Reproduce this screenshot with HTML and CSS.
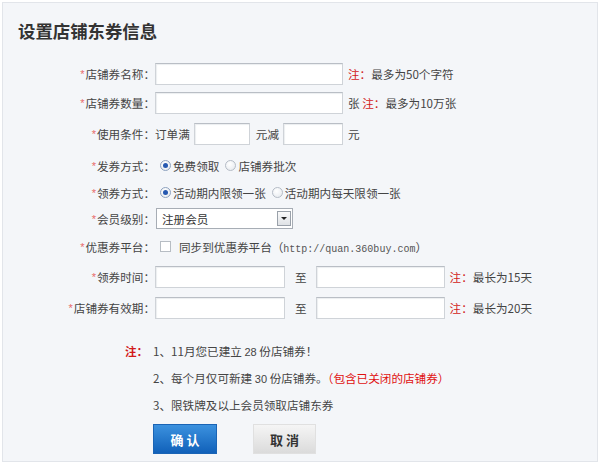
FILE: index.html
```html
<!DOCTYPE html>
<html lang="zh-CN">
<head>
<meta charset="utf-8">
<title>设置店铺东券信息</title>
<link rel="stylesheet" href="styles.css">
</head>
<body>
<div class="page">
  <h1 class="title">设置店铺东券信息</h1>
  <div class="form">
    <div class="row h29">
      <span class="label"><i class="req">*</i>店铺券名称：</span>
      <input class="txt w188" type="text">
      <span class="note"><b class="red">注：</b>最多为50个字符</span>
    </div>
    <div class="row h29">
      <span class="label"><i class="req">*</i>店铺券数量：</span>
      <input class="txt w188" type="text">
      <span class="note">张 <b class="red">注：</b>最多为10万张</span>
    </div>
    <div class="row h29 mt2">
      <span class="label"><i class="req">*</i>使用条件：</span>
      <span class="plain">订单满</span>
      <input class="txt w56 ml4" type="text">
      <span class="plain ml6">元减</span>
      <input class="txt w60 ml4" type="text">
      <span class="note">元</span>
    </div>
    <div class="row h27 mt4">
      <span class="label"><i class="req">*</i>发券方式：</span>
      <span class="radio on first"></span><span class="rtext">免费领取</span>
      <span class="radio"></span><span class="rtext">店铺券批次</span>
    </div>
    <div class="row h27">
      <span class="label"><i class="req">*</i>领券方式：</span>
      <span class="radio on first"></span><span class="rtext">活动期内限领一张</span>
      <span class="radio"></span><span class="rtext">活动期内每天限领一张</span>
    </div>
    <div class="row h25">
      <span class="label"><i class="req">*</i>会员级别：</span>
      <span class="select"><span class="sel-text">注册会员</span><span class="sel-btn"></span></span>
    </div>
    <div class="row h31">
      <span class="label"><i class="req">*</i>优惠券平台：</span>
      <span class="check"></span>
      <span class="ctext">同步到优惠券平台（<span class="mono">http://quan.360buy.com</span>）</span>
    </div>
    <div class="row h29">
      <span class="label"><i class="req">*</i>领券时间：</span>
      <input class="txt w130" type="text">
      <span class="plain to">至</span>
      <input class="txt w129" type="text">
      <span class="note"><b class="red">注：</b>最长为15天</span>
    </div>
    <div class="row h29 mt2">
      <span class="label"><i class="req">*</i>店铺券有效期：</span>
      <input class="txt w130" type="text">
      <span class="plain to">至</span>
      <input class="txt w129" type="text">
      <span class="note"><b class="red">注：</b>最长为20天</span>
    </div>
  </div>

  <div class="notes">
    <div class="nline"><b class="nhead red">注：</b><span>1、11月您已建立 <span class="num">28</span> 份店铺券！</span></div>
    <div class="nline"><span class="nhead"></span><span>2、每个月仅可新建 <span class="num">30</span> 份店铺券。<span class="red2">（包含已关闭的店铺券）</span></span></div>
    <div class="nline"><span class="nhead"></span><span>3、限铁牌及以上会员领取店铺东券</span></div>
  </div>

  <div class="actions">
    <button class="btn btn-ok" type="button">确 认</button>
    <button class="btn btn-cancel" type="button">取 消</button>
  </div>
</div>
</body>
</html>
```

FILE: styles.css
```css
html, body {
  margin: 0;
  padding: 0;
  background: #ffffff;
}
body {
  font-family: "Noto Sans CJK SC", "Liberation Sans", sans-serif;
  font-size: 11.6px;
  color: #444;
}
.page {
  margin: 2px;
  border: 1px solid #e2e5ea;
  background: #f4f6f9;
  height: 460px;
  box-sizing: border-box;
  overflow: hidden;
}
.title {
  margin: 0;
  padding: 17px 0 0 15px;
  height: 39px;
  box-sizing: border-box;
  font-size: 17.4px;
  line-height: 22px;
  font-weight: bold;
  color: #333;
}
.form {
  padding-top: 17px;
}
.row {
  display: flex;
  align-items: center;
  white-space: nowrap;
}
.h25 { height: 25px; }
.h27 { height: 27px; }
.h29 { height: 29px; }
.h31 { height: 31px; }

.label {
  width: 152px;
  text-align: right;
  color: #444;
  flex: none;
}
.req {
  font-style: normal;
  color: #e86a6a;
  font-family: "Liberation Sans", sans-serif;
  font-size: 11px;
  margin-right: 1px;
  position: relative;
  top: -1px;
}
.txt {
  height: 22px;
  box-sizing: border-box;
  border: 1px solid #cfd3d8;
  border-top-color: #b9bec5;
  background: #fff;
  box-shadow: inset 1px 1px 1px #eceef0;
  margin: 0;
  padding: 0 4px;
  font: inherit;
  flex: none;
}
.w188 { width: 188px; }
.w56 { width: 56px; }
.w60 { width: 60px; }
.w130 { width: 130px; }
.w129 { width: 129px; }

.note {
  margin-left: 5px;
  color: #444;
}
.red {
  color: #d21a1a;
  font-weight: normal;
}
.nhead.red { font-weight: bold; }
.plain { color: #444; }
.to {
  margin-left: 10px;
  margin-right: 9px;
}

.radio {
  width: 11px;
  height: 11px;
  box-sizing: border-box;
  border-radius: 50%;
  border: 1px solid #b5bcc6;
  background: radial-gradient(circle at 40% 35%, #ffffff, #e3e7ec);
  margin-left: 6px;
  margin-right: 2px;
  position: relative;
  flex: none;
}
.radio.first { margin-left: 5px; }
.radio.on {
  border-color: #8ea2bf;
}
.radio.on::after {
  content: "";
  position: absolute;
  left: 2px;
  top: 2px;
  width: 5px;
  height: 5px;
  border-radius: 50%;
  background: #2558b0;
}
.rtext { color: #444; }

.select {
  margin-left: 1px;
  width: 137px;
  height: 21px;
  box-sizing: border-box;
  border: 1px solid #a7adb5;
  background: #fff;
  display: flex;
  align-items: center;
  justify-content: space-between;
  padding: 0 1px 0 5px;
}
.sel-text { color: #333; }
.sel-btn {
  width: 14px;
  height: 15px;
  box-sizing: border-box;
  border: 1px solid #9aa1aa;
  background: linear-gradient(#fafafa, #dfe2e6);
  position: relative;
}
.sel-btn::after {
  content: "";
  position: absolute;
  left: 3px;
  top: 5px;
  border-left: 3px solid transparent;
  border-right: 3px solid transparent;
  border-top: 3px solid #222;
}

.check {
  margin-left: 5px;
  width: 11px;
  height: 11px;
  box-sizing: border-box;
  border: 1px solid #b7bdc4;
  background: #fff;
  flex: none;
}
.ctext {
  margin-left: 8px;
  color: #444;
}
.mono {
  font-family: "Liberation Mono", monospace;
  font-size: 10px;
  color: #555;
}

.notes {
  margin-top: 15px;
  padding-left: 122px;
}
.nline {
  display: flex;
  height: 27px;
  align-items: center;
  white-space: nowrap;
}
.nhead {
  width: 28px;
  flex: none;
}
.num {
  font-family: "Liberation Sans", sans-serif;
  font-size: 11px;
}
.red2 { color: #e01010; }

.actions {
  margin-top: 6px;
  padding-left: 150px;
  display: flex;
  gap: 36px;
}
.btn {
  height: 30px;
  border: 0;
  margin: 0;
  padding: 0;
  font-family: "Noto Sans CJK SC", sans-serif;
  font-size: 13px;
  font-weight: bold;
  cursor: pointer;
}
.btn-ok {
  width: 64px;
  color: #fff;
  background: linear-gradient(#3d93e0, #0f5fb8);
  box-shadow: inset 0 0 0 1px #1a64b5;
}
.btn-cancel {
  width: 63px;
  color: #333;
  background: linear-gradient(#f6f6f6, #dadada);
  box-shadow: inset 0 0 0 1px #e0e0e0;
}

/* spacing utilities (last, so they win over component margins) */
.mt2 { margin-top: 2px; }
.mt4 { margin-top: 4px; }
.ml4 { margin-left: 4px; }
.ml6 { margin-left: 6px; }
```
